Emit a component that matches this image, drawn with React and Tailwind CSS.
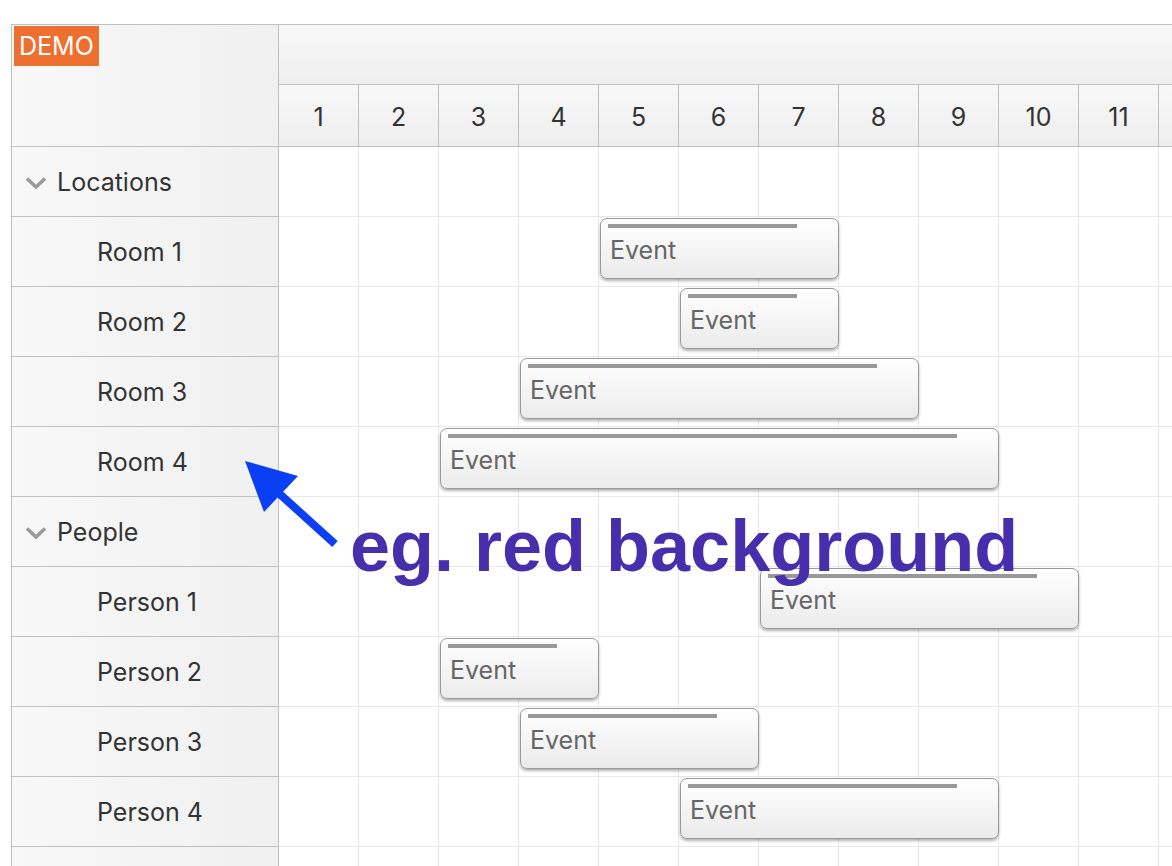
import React from 'react';

const CELL = 80;
const COLS = 12;

const rows = [
  { name: 'Locations', group: true },
  { name: 'Room 1', events: [{ start: 5, span: 3 }] },
  { name: 'Room 2', events: [{ start: 6, span: 2 }] },
  { name: 'Room 3', events: [{ start: 4, span: 5 }] },
  { name: 'Room 4', events: [{ start: 3, span: 7 }] },
  { name: 'People', group: true },
  { name: 'Person 1', events: [{ start: 7, span: 4 }] },
  { name: 'Person 2', events: [{ start: 3, span: 2 }] },
  { name: 'Person 3', events: [{ start: 4, span: 3 }] },
  { name: 'Person 4', events: [{ start: 6, span: 4 }] },
  { name: '', events: [] },
];

const font = { fontFamily: 'Inter, "Liberation Sans", sans-serif' };

const Chevron = () => (
  <svg width="22" height="14" viewBox="0 0 22 14" className="shrink-0">
    <path d="M2 2.5 L11 11 L20 2.5" fill="none" stroke="#9a9a9a" strokeWidth="3.5" />
  </svg>
);

const Event = ({ start, span }) => {
  const width = span * CELL - 1;
  return (
    <div
      className="absolute top-[1px] h-[61px] rounded-[7px] border-[1.5px] border-[#999] bg-gradient-to-b from-white to-[#ebebeb] shadow-[0_2px_3px_rgba(0,0,0,0.3)]"
      style={{ left: (start - 1) * CELL + 1, width }}
    >
      <div className="absolute left-[7px] top-[5px] h-[4px] bg-[#999]" style={{ width: width - 50 }} />
      <div className="pl-[9px] pt-[16px] text-[25px] leading-[30px] text-[#666]">Event</div>
    </div>
  );
};

const GridCells = ({ header }) => (
  <div className="flex h-full">
    {Array.from({ length: COLS }).map((_, i) => (
      <div
        key={i}
        className={`w-[80px] h-full shrink-0 border-r ${header ? 'border-[#c0c0c0] flex items-center justify-center pt-[4px] text-[25px] text-[#333]' : 'border-[#e8e8e8]'}`}
      >
        {header && i < COLS - 1 ? i + 1 : null}
      </div>
    ))}
  </div>
);

export default function App() {
  return (
    <div className="relative h-[866px] w-[1172px] overflow-hidden bg-white pt-[24px] pl-[11px]" style={font}>
      <div className="border-l border-t border-[#c0c0c0]">
        {/* Header */}
        <div className="flex">
          <div className="w-[267px] h-[122px] shrink-0 border-r border-b border-[#c0c0c0] bg-gradient-to-r from-[#f8f8f8] to-[#f0f0f0] pt-[1px] pl-[2px]">
            <div className="inline-block bg-[#ee7031] text-white text-[25px] leading-[40px] px-[5px] h-[40px]">DEMO</div>
          </div>
          <div className="flex-1 overflow-hidden">
            <div className="h-[60px] border-b border-[#c0c0c0] bg-gradient-to-b from-[#f8f8f8] to-[#eeeeee]" />
            <div className="h-[62px] border-b border-[#c0c0c0] bg-gradient-to-b from-[#f8f8f8] to-[#eeeeee] w-[960px]">
              <GridCells header />
            </div>
          </div>
        </div>

        {/* Rows */}
        {rows.map((row, idx) => (
          <div key={idx} className="flex h-[70px]">
            <div className="w-[267px] shrink-0 border-r border-b border-[#c0c0c0] bg-gradient-to-r from-[#f8f8f8] to-[#f0f0f0] flex items-center pt-[3px] text-[25px] text-[#333]">
              {row.group ? (
                <div className="flex items-center pl-[13px] gap-[10px]">
                  <Chevron />
                  <span>{row.name}</span>
                </div>
              ) : (
                <span className="pl-[85px]">{row.name}</span>
              )}
            </div>
            <div className="relative flex-1 overflow-hidden border-b border-[#e8e8e8]">
              <div className="w-[960px] h-full">
                <GridCells />
              </div>
              {(row.events || []).map((ev, i) => (
                <Event key={i} {...ev} />
              ))}
            </div>
          </div>
        ))}
      </div>

      {/* Annotation overlay */}
      <svg className="absolute left-0 top-0 pointer-events-none" width="1172" height="866">
        <line x1="262" y1="478" x2="335" y2="544" stroke="#0a3ff5" strokeWidth="8" />
        <polygon points="245,461 298,476 264,512" fill="#0a3ff5" />
      </svg>
      <div
        className="absolute left-[350px] top-[510px] text-[72px] leading-[72px] font-bold text-[#472ead] whitespace-nowrap"
        style={{ fontFamily: '"Liberation Sans", Arial, sans-serif' }}
      >
        eg. red background
      </div>
    </div>
  );
}
